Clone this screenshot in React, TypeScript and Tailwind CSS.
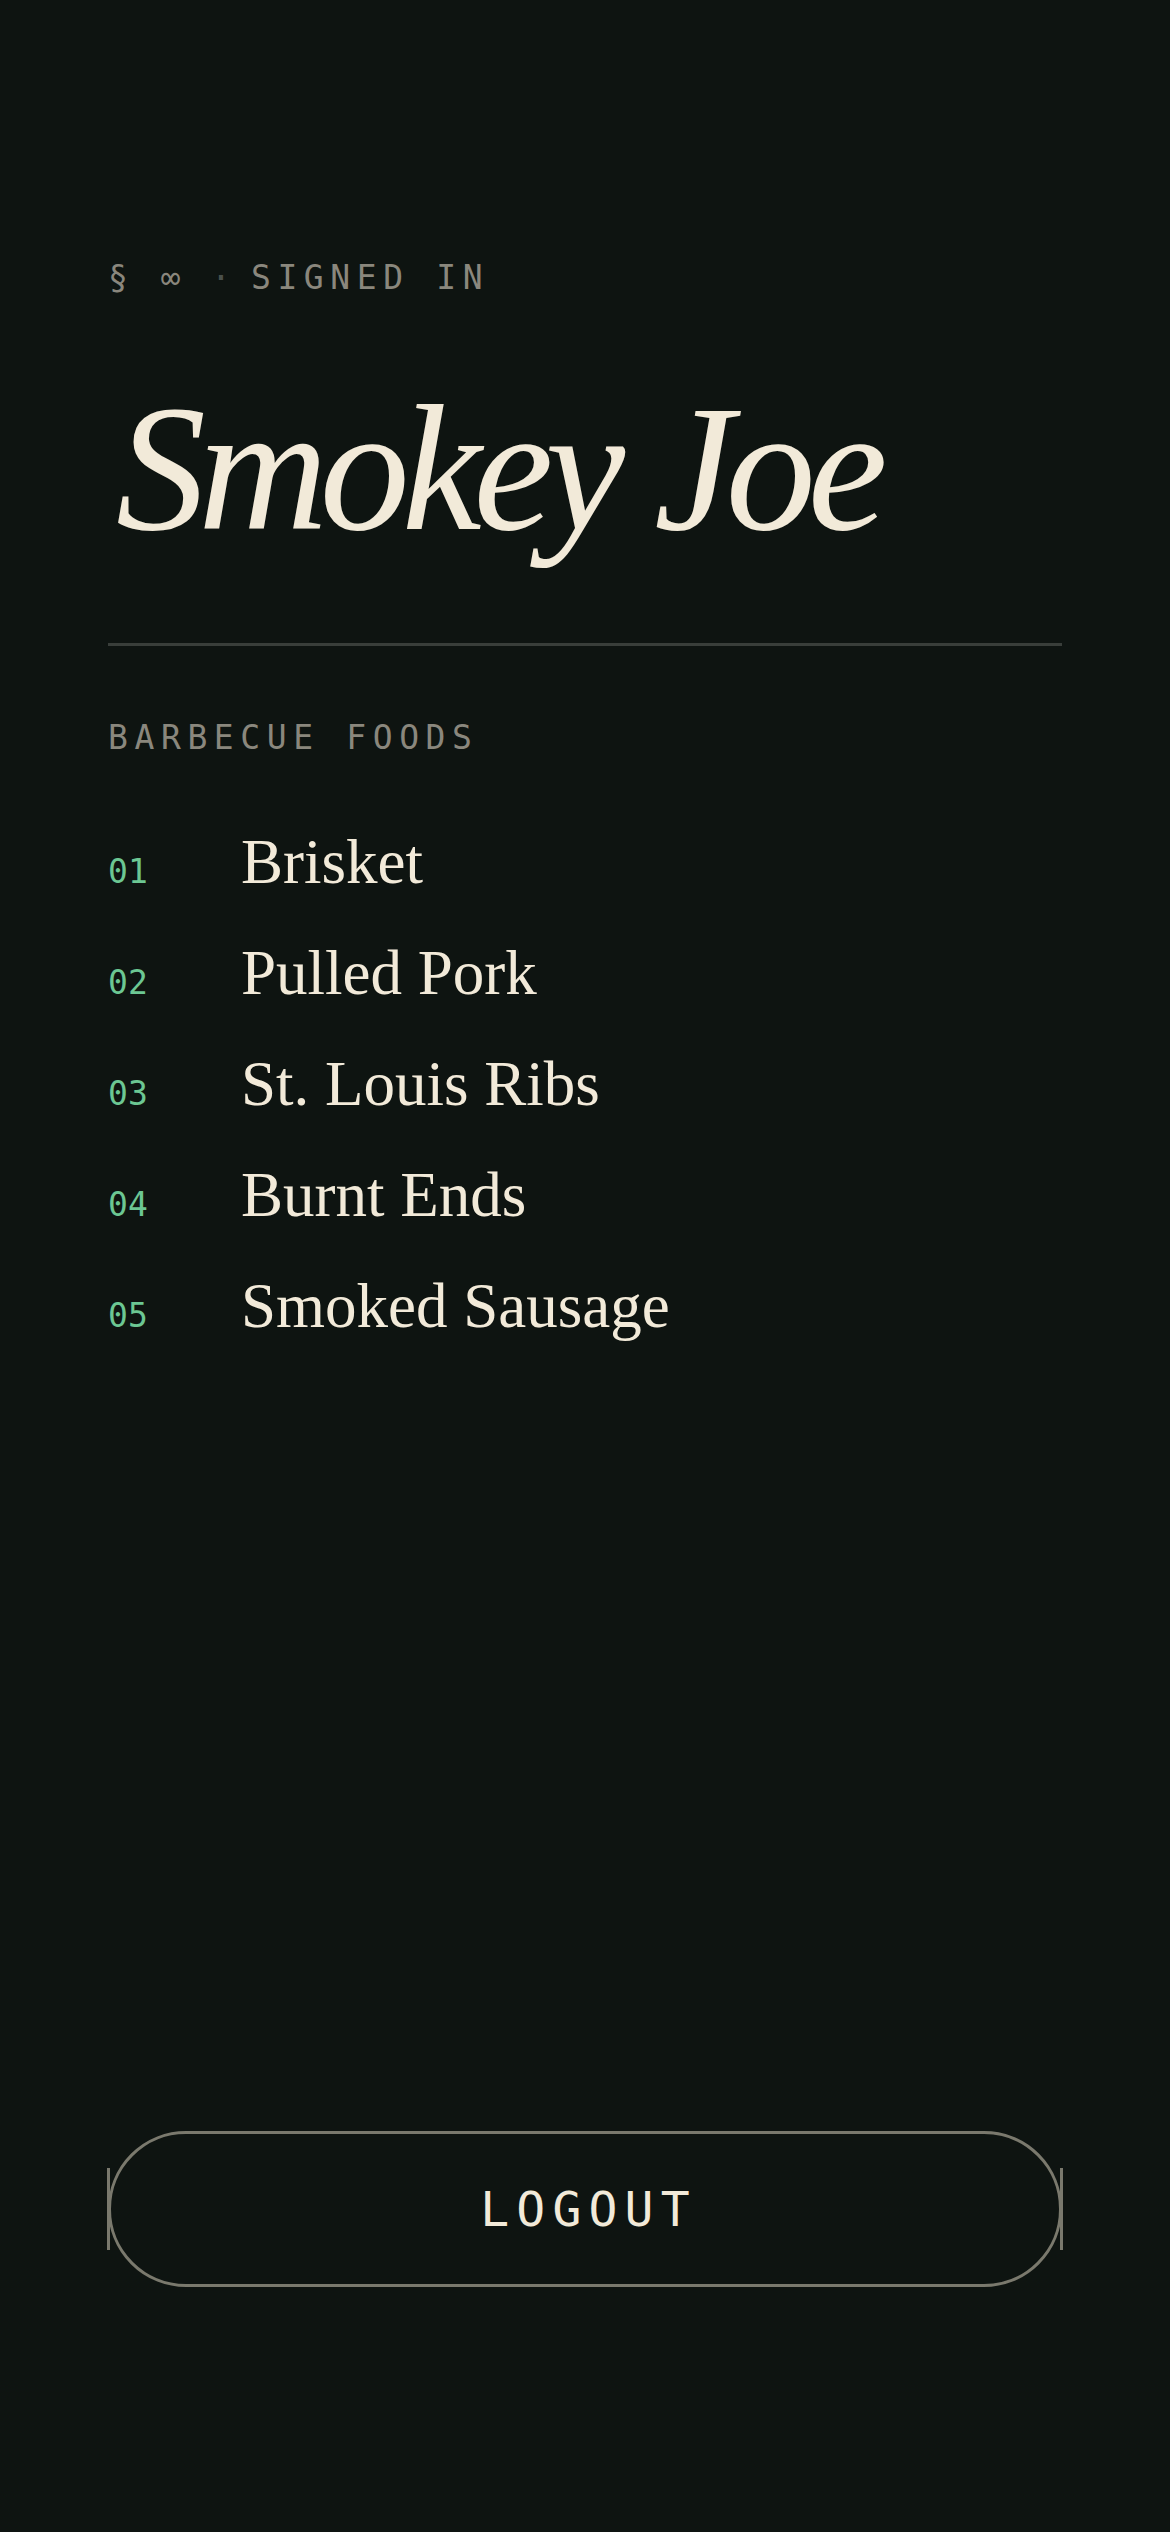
import React from 'react';

const mono = { fontFamily: '"DejaVu Sans Mono", "Liberation Mono", monospace' };
const serif = { fontFamily: '"Liberation Serif", "DejaVu Serif", serif' };

const foods = ['Brisket', 'Pulled Pork', 'St. Louis Ribs', 'Burnt Ends', 'Smoked Sausage'];

export default function App() {
  return (
    <div className="flex min-h-screen flex-col bg-[#0e1411] px-[108px] pb-[245px] pt-[258px]">
      <div className="flex items-center text-[33px] leading-[40px] tracking-[0.2em] text-[#8a877d]" style={mono}>
        <span>§</span>
        <span className="ml-[26px]">∞</span>
        <span className="ml-[24px] w-[14px] text-[#4a504c]">·</span>
        <span className="ml-[26px]">SIGNED IN</span>
      </div>

      <h1 className="mt-[81px] pl-[8px] text-[180px] italic leading-none tracking-[-0.045em] text-[#f2ead9]" style={serif}>
        Smokey Joe
      </h1>

      <div className="mt-[84px] h-[3px] w-full bg-[#393e3a]" />

      <div className="mt-[72px] text-[33px] leading-[40px] tracking-[0.2em] text-[#8a877d]" style={mono}>
        BARBECUE FOODS
      </div>

      <ul className="mt-[49px]">
        {foods.map((f, i) => (
          <li key={f} className="flex h-[111px] items-baseline leading-[111px]">
            <span className="w-[133px] shrink-0 text-[33px] text-[#6cc793]" style={mono}>
              0{i + 1}
            </span>
            <span className="text-[63px] text-[#f2ead9]" style={serif}>
              {f}
            </span>
          </li>
        ))}
      </ul>

      <button
        type="button"
        className="relative mt-auto flex h-[156px] w-full items-center justify-center rounded-full border-[3px] border-[#7a796d] pl-[7px] text-[48px] tracking-[0.15em] text-[#f2ead9]"
        style={mono}
      >
        <span className="absolute left-[-4px] top-1/2 h-[82px] w-[3px] -translate-y-1/2 bg-[#7a796d]" />
        <span className="absolute right-[-4px] top-1/2 h-[82px] w-[3px] -translate-y-1/2 bg-[#7a796d]" />
        LOGOUT
      </button>
    </div>
  );
}
